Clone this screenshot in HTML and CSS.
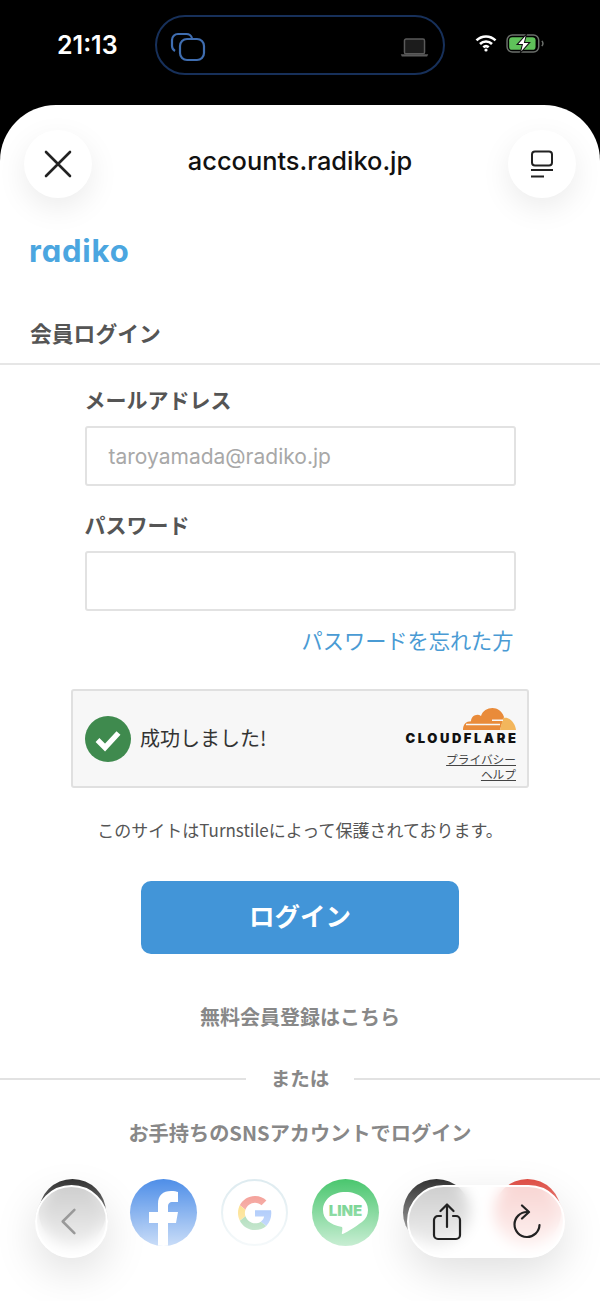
FILE: index.html
```html
<!DOCTYPE html>
<html lang="ja">
<head>
<meta charset="utf-8">
<title>radiko login</title>
<link rel="stylesheet" href="styles.css">
</head>
<body>
<div class="status">
  <div class="time">21:13</div>
  <div class="island">
    <svg class="island-tabs" width="36" height="30" viewBox="0 0 36 30" fill="none" stroke="#3f6db0" stroke-width="2.2"><path d="M5 19 A6 6 0 0 1 2 14 V8 A6 6 0 0 1 8 2 H16 A6 6 0 0 1 22 6"/><rect x="10" y="7" width="24" height="21" rx="7"/></svg>
    <svg class="island-laptop" width="29" height="19" viewBox="0 0 26 18"><rect x="3.5" y="1" width="19" height="14" rx="1.5" fill="#1c1c1c" stroke="#5a5a5a" stroke-width="1.4"/><path d="M0 15.500 H26 L25 17.500 H1 Z" fill="#5a5a5a"/></svg>
  </div>
  <div class="sys">
    <svg width="22" height="18" viewBox="0 0 22 18" fill="none" stroke="#fff" stroke-width="2.6"><path d="M1.5 6.4 A13.5 13.5 0 0 1 20.5 6.4"/><path d="M5 10 A8.5 8.5 0 0 1 17 10"/><path d="M8.3 13.3 A4 4 0 0 1 13.7 13.3"/><circle cx="11" cy="16" r="1.6" fill="#fff" stroke="none"/></svg>
    <svg width="38" height="19" viewBox="0 0 36 18"><rect x="1" y="1" width="30" height="16" rx="5" fill="none" stroke="#6b6f6b" stroke-width="1.4"/><rect x="3" y="3" width="25" height="12" rx="3" fill="#5fc25a"/><path d="M34 6.500 q2 2.500 0 5" fill="none" stroke="#6b6f6b" stroke-width="1.4"/><path d="M19.5 0 L10.5 10 H15.5 L13.500 18 L22.500 8 H17.500 Z" fill="#fff" stroke="#111" stroke-width="1"/></svg>
  </div>
</div>

<main class="sheet">
  <header class="bar">
    <div class="round">
      <svg width="28" height="28" viewBox="0 0 28 28" fill="none" stroke="#222" stroke-width="2.6" stroke-linecap="round"><path d="M2 2 L26 26 M26 2 L2 26"/></svg>
    </div>
    <div class="host">accounts.radiko.jp</div>
    <div class="round">
      <svg width="24" height="28" viewBox="0 0 24 28" fill="none" stroke="#222" stroke-width="2"><rect x="2" y="1.500" width="20" height="14" rx="3"/><path d="M1 20 H23" /><path d="M1 26.500 H14"/></svg>
    </div>
  </header>

  <div class="logo">radiko</div>
  <h1 class="heading">会員ログイン</h1>

  <form class="form">
    <label class="label">メールアドレス</label>
    <div class="input placeholder">taroyamada@radiko.jp</div>
    <label class="label label-second">パスワード</label>
    <div class="input"></div>
    <div class="forgot">パスワードを忘れた方</div>
  </form>

  <section class="turnstile">
    <div class="ok">
      <svg width="46" height="46" viewBox="0 0 46 46"><circle cx="23" cy="23" r="23" fill="#3f8a4e"/><path d="M12.500 24 L20 31.500 L33.500 17" fill="none" stroke="#fff" stroke-width="5.4"/></svg>
      <span class="ok-text">成功しました!</span>
    </div>
    <div class="cf">
      <svg width="54" height="28" viewBox="0 0 54 26" preserveAspectRatio="none"><path d="M1 25 C1 20 4 17 9 17 C9 12 15 9 19 12 C22 3 38 1 42 13 L38 25 Z" fill="#e98b3a"/><path d="M38 25 L41 14 C47 12 53 18 54 25 Z" fill="#f3b65c"/><path d="M4 20 H38 M30 16 H41" stroke="#f7f7f7" stroke-width="1.4"/></svg>
      <div class="cf-name">CLOUDFLARE</div>
      <a class="cf-link">プライバシー</a>
      <a class="cf-link">ヘルプ</a>
    </div>
  </section>

  <p class="note">このサイトはTurnstileによって保護されております。</p>
  <div class="submit">ログイン</div>
  <div class="gray register">無料会員登録はこちら</div>
  <div class="divider"><span>または</span></div>
  <div class="gray sns-label">お手持ちのSNSアカウントでログイン</div>

  <div class="sns">
    <div class="sns-icon icon-dark"></div>
    <div class="sns-icon icon-fb">
      <svg width="67" height="67" viewBox="0 0 67 67"><path d="M28 67 V44 H19 V33 H28 V25 C28 16 33 12 41 12 C44 12 47 12.500 48 13 V23 H43 C39 23 38 25 38 28 V33 H48 L46 44 H38 V67 Z" fill="#fff"/></svg>
    </div>
    <div class="sns-icon icon-google">
      <svg class="google-mark" width="34" height="34" viewBox="0 0 48 48"><path fill="#ea4335" d="M24 9.500c3.500 0 6.700 1.200 9.200 3.600l6.900-6.900C35.900 2.400 30.500 0 24 0 14.600 0 6.500 5.400 2.600 13.200l8 6.200C12.500 13.700 17.800 9.500 24 9.500z"/><path fill="#4285f4" d="M47 24.500c0-1.600-.1-3.100-.4-4.500H24v9h12.900c-.6 3-2.200 5.500-4.700 7.200l7.700 6c4.500-4.200 7.100-10.300 7.100-17.700z"/><path fill="#fbbc05" d="M10.500 28.600c-.5-1.400-.8-3-.8-4.600s.3-3.200.8-4.600l-8-6.200C.9 16.500 0 20.100 0 24s.9 7.500 2.600 10.800l7.900-6.200z"/><path fill="#34a853" d="M24 48c6.500 0 11.900-2.100 15.900-5.800l-7.700-6c-2.200 1.400-4.900 2.300-8.200 2.300-6.200 0-11.500-4.200-13.400-9.900l-8 6.200C6.500 42.600 14.600 48 24 48z"/></svg>
    </div>
    <div class="sns-icon icon-line">
      <svg width="67" height="67" viewBox="0 0 67 67"><path d="M33.500 13 C20 13 11 21 11 31 C11 40 18 46 30 48 C31 50 29.500 54 30 55 C31 56 43 48 50 43 C54 40 56 36 56 31 C56 21 47 13 33.500 13 Z" fill="#fff"/><text x="33.500" y="37" text-anchor="middle" class="line-word">LINE</text></svg>
    </div>
    <div class="sns-icon icon-dark"></div>
    <div class="sns-icon icon-red"></div>
  </div>

  <div class="fade"></div>

  <div class="float back">
    <svg width="18" height="27" viewBox="0 0 20 30" fill="none" stroke="#999" stroke-width="2.8" stroke-linecap="round" stroke-linejoin="round"><path d="M16 2 L3 15 L16 28"/></svg>
  </div>
  <div class="float pill">
    <svg width="30" height="38" viewBox="0 0 30 38" fill="none" stroke="#222" stroke-width="2.200" stroke-linecap="round" stroke-linejoin="round"><path d="M9 13 H6 A4 4 0 0 0 2 17 V32 A4 4 0 0 0 6 36 H24 A4 4 0 0 0 28 32 V17 A4 4 0 0 0 24 13 H21"/><path d="M15 24 V2 M8.500 8 L15 1.500 L21.500 8"/></svg>
    <svg width="30" height="36" viewBox="0 0 30 36" fill="none" stroke="#222" stroke-width="2.200" stroke-linecap="round" stroke-linejoin="round"><path d="M15 8 A12.500 12.500 0 1 0 27.500 21"/><path d="M10 1.500 L17 8 L10 14.500"/></svg>
  </div>
</main>
</body>
</html>
```
FILE: styles.css
```css
* { box-sizing: border-box; }
html, body { margin: 0; height: 1301px; overflow: hidden; }
body {
  background: #000;
  font-family: "Noto Sans CJK JP", "Inter", sans-serif;
  width: 600px;
}
.status {
  height: 105px;
  padding: 15px 54px 0 57px;
  display: flex;
  align-items: flex-start;
  color: #fff;
}
.time {
  font: 600 25px/60px "Inter", sans-serif;
  width: 98px;
}
.island {
  width: 290px;
  height: 60px;
  border: 2px solid #17305a;
  border-radius: 30px;
  display: flex;
  align-items: center;
  justify-content: space-between;
  padding: 4px 14px 0 13px;
}
.sys {
  margin-left: 30px;
  height: 56px;
  display: flex;
  align-items: center;
  gap: 9px;
}
.sheet {
  position: relative;
  height: 1196px;
  background: #fff;
  border-radius: 56px 56px 0 0;
  overflow: hidden;
  color: #555;
}
.bar {
  display: flex;
  justify-content: space-between;
  align-items: center;
  padding: 25px 24px 0;
}
.round {
  width: 68px;
  height: 68px;
  border-radius: 50%;
  background: #fff;
  box-shadow: 0 10px 30px rgba(0, 0, 0, .08);
  display: flex;
  align-items: center;
  justify-content: center;
}
.host {
  font: 500 25.4px/1 "Inter", sans-serif;
  color: #111;
  margin-top: -7px;
}
.logo {
  margin: 35px 0 0 29px;
  font: 700 31px/36px "Inter", sans-serif;
  font-feature-settings: "cv11" 1;
  letter-spacing: 0.8px;
  color: #4ba6e0;
}
.heading {
  margin: 49px 0 0;
  padding: 0 0 15px 30px;
  border-bottom: 2px solid #e6e6e6;
  font-size: 21.8px;
  line-height: 30px;
  font-weight: 700;
}
.form {
  width: 431px;
  margin: 19px 0 0 84.5px;
  display: flex;
  flex-direction: column;
}
.label {
  font-size: 21px;
  line-height: 30px;
  font-weight: 700;
}
.label-second { margin-top: 23px; }
.input {
  margin-top: 12px;
  height: 60px;
  border: 2px solid #e2e2e2;
  border-radius: 3px;
  background: #fff;
}
.placeholder {
  padding-left: 22px;
  font: 400 21px/58px "Inter", sans-serif;
  color: #a8a8a8;
}
.forgot {
  margin-top: 14px;
  text-align: right;
  padding-right: 2px;
  font-size: 21.2px;
  line-height: 30px;
  color: #4a9bd4;
}
.turnstile {
  width: 458px;
  height: 99px;
  margin: 34px auto 0;
  background: #f7f7f7;
  border: 2px solid #e0e0e0;
  border-radius: 3px;
  display: flex;
  justify-content: space-between;
  align-items: center;
  padding: 0 11px 0 12px;
}
.ok {
  display: flex;
  align-items: center;
  gap: 9px;
  font-size: 20px;
  color: #333;
}
.ok-text { margin-top: -2px; }
.cf {
  display: flex;
  flex-direction: column;
  align-items: flex-end;
  padding-top: 7px;
}
.cf-name {
  font: 900 13px/14px "Inter", sans-serif;
  letter-spacing: 2.55px;
  margin: 0 -2.5px 6px 0;
  color: #111;
}
.cf-link {
  font-size: 11.7px;
  line-height: 15px;
  color: #444;
  text-decoration: underline;
}
.note {
  margin: 30px 0 0;
  text-align: center;
  font-size: 17px;
  line-height: 24px;
  color: #555;
}
.submit {
  width: 318px;
  height: 73px;
  margin: 39px auto 0;
  background: #4295d8;
  border-radius: 10px;
  color: #fff;
  font-size: 25.5px;
  font-weight: 700;
  line-height: 68px;
  text-align: center;
}
.gray {
  text-align: center;
  font-weight: 700;
  line-height: 30px;
  color: #888;
}
.register {
  margin-top: 48px;
  font-size: 20px;
}
.divider {
  margin-top: 32px;
  height: 30px;
  display: flex;
  align-items: center;
  font-size: 19.5px;
  font-weight: 700;
  color: #888;
}
.divider::before, .divider::after {
  content: "";
  flex: 1;
  height: 2px;
  background: #e2e2e2;
}
.divider span { padding: 0 25px 3px; }
.sns-label {
  margin-top: 24px;
  font-size: 20.2px;
}
.sns {
  margin-top: 31px;
  padding: 0 39px;
  display: flex;
  justify-content: space-between;
}
.sns-icon {
  width: 67px;
  height: 67px;
  border-radius: 50%;
  overflow: hidden;
  display: flex;
  align-items: center;
  justify-content: center;
  flex: none;
}
.icon-dark { background: #000; }
.icon-red { background: #dc2418; }
.icon-fb { background: #2272e2; }
.icon-google { background: #fff; border: 2px solid #d5e6ec; }
.google-mark { opacity: .75; }
.icon-line { background: #1cb84a; }
.line-word {
  font: 900 15px "Inter", sans-serif;
  fill: #1cb84a;
}
.fade {
  position: absolute;
  left: 0;
  right: 0;
  bottom: 0;
  height: 150px;
  background: linear-gradient(to bottom, rgba(255, 255, 255, 0), rgba(255, 255, 255, .2) 28px, rgba(255, 255, 255, .8) 100px, #fff 150px);
}
.float {
  position: absolute;
  top: 1080px;
  height: 73px;
  border: 2px solid #fff;
  background: rgba(255, 255, 255, .74);
  -webkit-backdrop-filter: blur(7px);
  backdrop-filter: blur(7px);
  box-shadow: 0 14px 44px rgba(0, 0, 0, .13);
  display: flex;
  align-items: center;
}
.back {
  left: 35px;
  width: 73px;
  border-radius: 50%;
  justify-content: center;
  padding-right: 5px;
}
.pill {
  left: 407px;
  width: 158px;
  border-radius: 37px;
  justify-content: space-between;
  padding: 0 21px 0 23px;
}
```
